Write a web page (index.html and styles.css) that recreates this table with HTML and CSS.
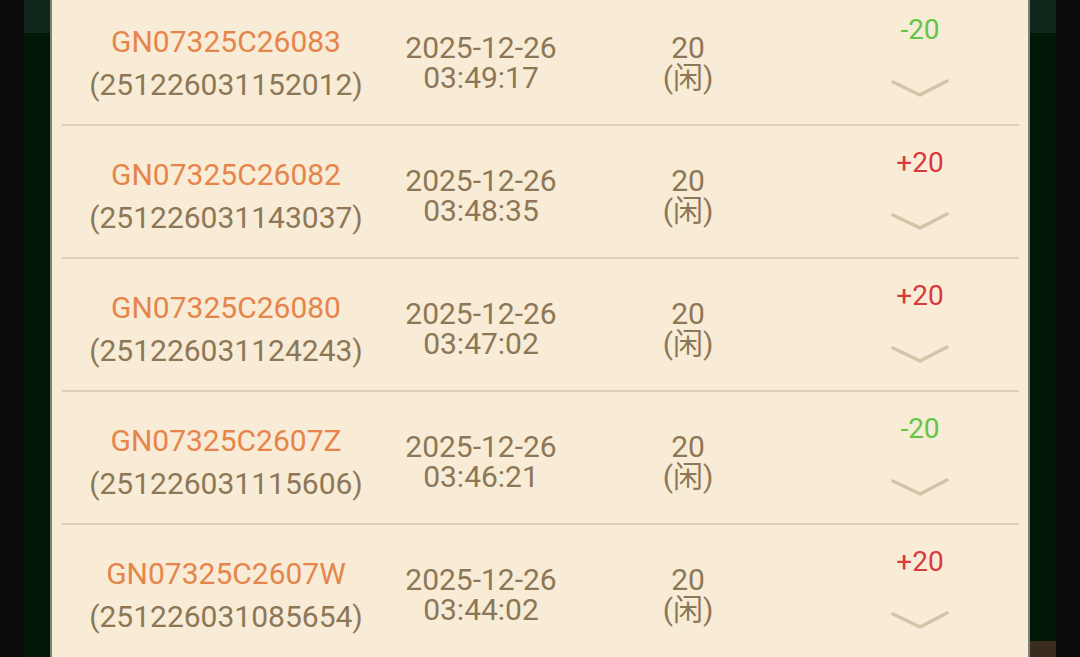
FILE: index.html
```html
<!DOCTYPE html>
<html lang="zh">
<head>
<meta charset="utf-8">
<title>记录</title>
<link rel="stylesheet" href="styles.css">
</head>
<body>
<div class="edge"></div>
<div class="gutter">
  <div class="gutter-top"></div>
  <div class="gutter-fill"></div>
</div>
<main class="panel">
  <div class="list">
    <div class="row">
      <div class="code"><span class="code-id">GN07325C26083</span><span class="code-no">(251226031152012)</span></div>
      <div class="time"><span>2025-12-26</span><span>03:49:17</span></div>
      <div class="bet"><span>20</span><span>(闲)</span></div>
      <div class="result"><span class="lose">-20</span><svg class="chev" viewBox="0 0 58 20"><polyline points="2,3 29,16 56,2"/></svg></div>
    </div>
    <div class="row">
      <div class="code"><span class="code-id">GN07325C26082</span><span class="code-no">(251226031143037)</span></div>
      <div class="time"><span>2025-12-26</span><span>03:48:35</span></div>
      <div class="bet"><span>20</span><span>(闲)</span></div>
      <div class="result"><span class="win">+20</span><svg class="chev" viewBox="0 0 58 20"><polyline points="2,3 29,16 56,2"/></svg></div>
    </div>
    <div class="row">
      <div class="code"><span class="code-id">GN07325C26080</span><span class="code-no">(251226031124243)</span></div>
      <div class="time"><span>2025-12-26</span><span>03:47:02</span></div>
      <div class="bet"><span>20</span><span>(闲)</span></div>
      <div class="result"><span class="win">+20</span><svg class="chev" viewBox="0 0 58 20"><polyline points="2,3 29,16 56,2"/></svg></div>
    </div>
    <div class="row">
      <div class="code"><span class="code-id">GN07325C2607Z</span><span class="code-no">(251226031115606)</span></div>
      <div class="time"><span>2025-12-26</span><span>03:46:21</span></div>
      <div class="bet"><span>20</span><span>(闲)</span></div>
      <div class="result"><span class="lose">-20</span><svg class="chev" viewBox="0 0 58 20"><polyline points="2,3 29,16 56,2"/></svg></div>
    </div>
    <div class="row">
      <div class="code"><span class="code-id">GN07325C2607W</span><span class="code-no">(251226031085654)</span></div>
      <div class="time"><span>2025-12-26</span><span>03:44:02</span></div>
      <div class="bet"><span>20</span><span>(闲)</span></div>
      <div class="result"><span class="win">+20</span><svg class="chev" viewBox="0 0 58 20"><polyline points="2,3 29,16 56,2"/></svg></div>
    </div>
  </div>
</main>
<div class="gutter">
  <div class="gutter-top"></div>
  <div class="gutter-fill"></div>
  <div class="gutter-bottom"></div>
</div>
<div class="edge"></div>
</body>
</html>
```

FILE: styles.css
```css
html, body {
  margin: 0;
  padding: 0;
}

body {
  width: 1080px;
  height: 657px;
  overflow: hidden;
  display: flex;
  background: #0b0b0b;
  font-family: Roboto, "Noto Sans CJK SC", sans-serif;
}

.edge {
  width: 24px;
  flex: none;
  background: #0b0b0b;
}

.gutter {
  width: 26px;
  flex: none;
  display: flex;
  flex-direction: column;
  background: #021807;
}

.gutter-top {
  height: 33px;
  background: #10271c;
}

.gutter-fill {
  flex: 1;
}

.gutter-bottom {
  height: 16px;
  background: #3a2c1d;
}

.panel {
  width: 976px;
  flex: none;
  background: #f8ecd7;
  border-left: 2px solid #7d827a;
  border-right: 2px solid #7d827a;
  overflow: hidden;
}

.list {
  margin-top: -7px;
}

.row {
  height: 123px;
  padding-top: 8px;
  margin: 0 9px 0 10px;
  border-bottom: 2px solid #dcd0b6;
  display: grid;
  grid-template-columns: 328px 182px 232px 1fr;
  align-items: center;
  color: #8d7756;
  font-size: 30px;
}

.row:last-child {
  border-bottom-color: transparent;
}

.code, .time, .bet {
  display: flex;
  flex-direction: column;
  align-items: center;
  text-align: center;
}

.code {
  line-height: 43px;
}

.code-id {
  color: #e6854b;
}

.time, .bet {
  line-height: 30px;
}

.result {
  align-self: start;
  margin-top: 14px;
  padding-left: 17px;
  display: flex;
  flex-direction: column;
  align-items: center;
  line-height: 30px;
  font-size: 28px;
}

.lose {
  color: #62c646;
}

.win {
  color: #d8393b;
}

.chev {
  width: 58px;
  height: 20px;
  margin-top: 34px;
  overflow: visible;
}

.chev polyline {
  fill: none;
  stroke: #d3c4a8;
  stroke-width: 3.5;
  stroke-linecap: round;
  stroke-linejoin: round;
  filter: blur(0.6px);
}
```
